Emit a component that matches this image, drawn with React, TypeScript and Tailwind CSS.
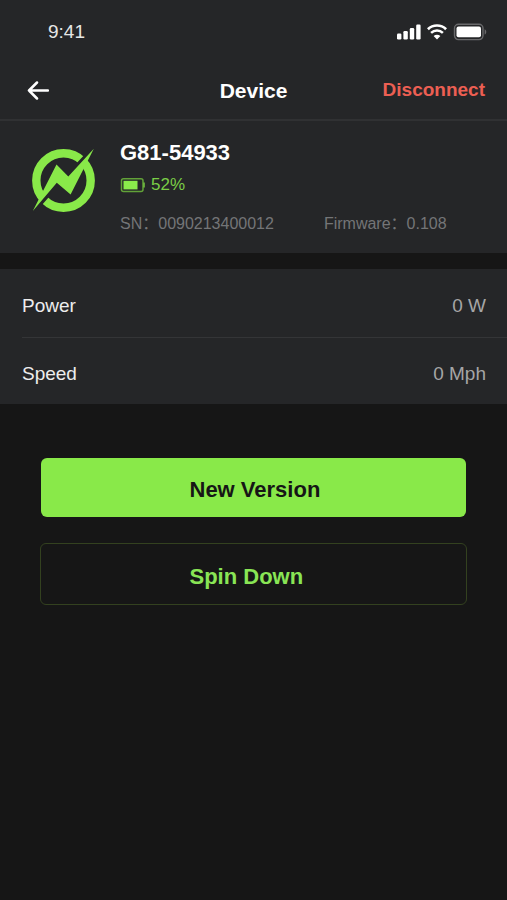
const SignalIcon = () => (
  <svg width="24" height="16" viewBox="0 0 24 16" fill="#fff" aria-hidden="true">
    <rect x="0" y="9.5" width="4.4" height="6" rx="1.2" />
    <rect x="6.4" y="7" width="4.4" height="8.5" rx="1.2" />
    <rect x="12.8" y="4" width="4.4" height="11.5" rx="1.2" />
    <rect x="19.2" y="0.5" width="4.4" height="15" rx="1.2" />
  </svg>
);

const WifiIcon = () => (
  <svg width="20" height="16" viewBox="0 0 20 16" fill="none" stroke="#fff" aria-hidden="true">
    <path d="M0.9 5.2a13 13 0 0 1 18.2 0" strokeWidth="2.7" />
    <path d="M4.1 8.8a8.4 8.4 0 0 1 11.8 0" strokeWidth="2.5" />
    <path d="M10 15.6 6.6 12a4.9 4.9 0 0 1 6.800 0Z" fill="#fff" stroke="none" />
  </svg>
);

const PhoneBatteryIcon = () => (
  <svg width="34" height="18" viewBox="0 0 34 18" aria-hidden="true">
    <rect x="1.500" y="1.200" width="28.500" height="15.400" rx="4" fill="none" stroke="#69696b" strokeWidth="1.4" />
    <path d="M31.600 6.200c2.200.8 2.200 4.600 0 5.400Z" fill="#69696b" />
    <rect x="3.500" y="3.500" width="24.500" height="10.800" rx="2" fill="#fff" />
  </svg>
);

const DeviceBatteryIcon = () => (
  <svg width="25" height="15" viewBox="0 0 25 15" aria-hidden="true">
    <rect x="1.500" y="0.800" width="21.500" height="12.600" rx="2" fill="none" stroke="#62a238" strokeWidth="1.500" />
    <path d="M24 4.600v5" stroke="#72bd40" strokeWidth="1.600" />
    <rect x="3.500" y="2.800" width="14" height="8.600" fill="#8aeb4b" />
  </svg>
);

const DeviceLogo = () => (
  <svg width="64" height="64" viewBox="0 0 64 64" className="overflow-visible" role="img" aria-label="Device logo">
    <circle cx="31.500" cy="31.500" r="27.200" fill="none" stroke="#89e949" strokeWidth="8.400" />
    <path d="M36.300 26.700 61.800 -0.500M24.500 35.500 1 62.300" stroke="#252628" strokeWidth="5" />
    <path d="M61.800 -0.300 38.600 45.400 24.800 33.700 0.800 62 24.500 15.500 36.300 27.500Z" fill="#89e949" />
  </svg>
);

const readings = [
  { label: "Power", value: "0 W" },
  { label: "Speed", value: "0 Mph" },
];

export default function App() {
  return (
    <div className="flex min-h-screen flex-col bg-[#161616] font-['Liberation_Sans','Noto_Sans_CJK_SC',sans-serif] text-white">
      <header className="border-b-2 border-[#303133] bg-[#252628]">
        <div className="flex h-16 items-center justify-between pr-5 pl-12">
          <span className="text-[19px] text-[#e6e6e6]">9:41</span>
          <div className="flex items-center gap-1.5">
            <SignalIcon />
            <WifiIcon />
            <PhoneBatteryIcon />
          </div>
        </div>
        <div className="grid h-[55px] grid-cols-[1fr_auto_1fr] items-center px-[22px] pb-0.5">
          <button type="button" aria-label="Back" className="flex size-8 items-center justify-center">
            <svg width="22" height="20" viewBox="0 0 22 20" fill="none" stroke="#fff" strokeWidth="2.5" strokeLinecap="round" strokeLinejoin="round" aria-hidden="true">
              <path d="M21 9.500H2M10 1.500 2 9.500l8 8" />
            </svg>
          </button>
          <h1 className="text-[21px] font-bold">Device</h1>
          <button type="button" className="justify-self-end text-[19px] font-bold text-[#ec5f53]">
            Disconnect
          </button>
        </div>
      </header>

      <main>
        <section className="flex gap-6 bg-[#252628] pt-4 pr-4 pb-[18px] pl-8">
          <div className="shrink-0 pt-3">
            <DeviceLogo />
          </div>
          <div className="flex-1">
            <h2 className="text-[22px] leading-8 font-bold">G81-54933</h2>
            <div className="flex h-8 items-center gap-1.5 text-[17px] text-[#7ace46]">
              <DeviceBatteryIcon />
              52%
            </div>
            <div className="mt-3 flex h-[22px] items-center gap-[50px] text-[16px] leading-[22px] whitespace-nowrap text-[#747577]">
              <span>SN：0090213400012</span>
              <span>Firmware：0.108</span>
            </div>
          </div>
        </section>

        <dl className="mt-4 bg-[#252628] pl-[22px] text-[19px]">
          {readings.map(({ label, value }) => (
            <div key={label} className="flex h-[69px] items-center justify-between border-b border-[#343537] pt-1.5 pr-[21px] last:h-[66px] last:border-b-0">
              <dt className="text-[#ededed]">{label}</dt>
              <dd className="text-[#a5a5a6]">{value}</dd>
            </div>
          ))}
        </dl>

        <div className="flex flex-col gap-[26px] px-10 pt-[54px] text-[22px] font-bold">
          <button type="button" className="mx-px flex h-[59px] items-center justify-center rounded-md bg-[#89e949] pt-1 text-[#161616]">
            <span className="w-32 text-left whitespace-nowrap">New Version</span>
          </button>
          <button type="button" className="flex h-[62px] items-center justify-center rounded-md border border-[#33411f] pt-1 text-[#89e555]">
            <span className="w-32 text-left whitespace-nowrap">Spin Down</span>
          </button>
        </div>
      </main>
    </div>
  );
}
